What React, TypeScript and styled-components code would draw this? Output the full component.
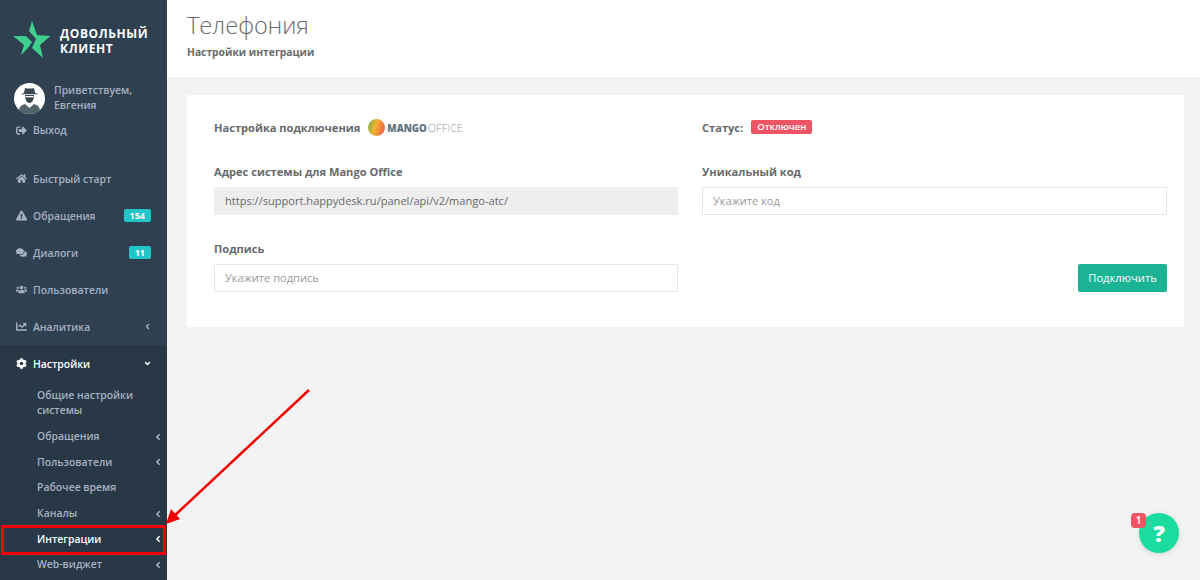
import styled, { createGlobalStyle } from 'styled-components'
import { FaSignOutAlt, FaHome, FaExclamationTriangle, FaComments, FaUsers, FaChartLine, FaCog, FaAngleLeft, FaAngleDown } from 'react-icons/fa'

const GlobalStyle = createGlobalStyle`
  html, body { margin: 0; padding: 0; height: 100%; overflow: hidden; }
  body { font-family: 'Open Sans', 'Liberation Sans', sans-serif; background: #f3f3f4; }
`

const Page = styled.div`
  position: relative;
  display: flex;
  width: 1200px;
  height: 580px;
  overflow: hidden;
`

const Sidebar = styled.aside`
  flex: 0 0 167px;
  display: flex;
  flex-direction: column;
  background: #2f4050;
  overflow: hidden;
`

const Brand = styled.div`
  display: flex;
  align-items: center;
  gap: 9px;
  padding: 20px 0 0 13px;
  height: 39px;
`

const BrandName = styled.div`
  color: #fff;
  font-size: 12px;
  line-height: 15px;
  font-weight: 700;
  letter-spacing: 0.6px;
  padding-top: 2px;
`

const Profile = styled.div`
  display: flex;
  gap: 9px;
  padding: 24px 0 0 14px;
`

const Greeting = styled.div`
  color: #a7b1c2;
  font-size: 10.4px;
  line-height: 14.5px;
  font-weight: 600;
`

const MenuRow = styled.div<{ $active?: boolean }>`
  display: flex;
  align-items: center;
  height: 37px;
  flex: none;
  padding: 0 15px 0 16px;
  font-size: 10.4px;
  font-weight: 600;
  color: ${p => (p.$active ? '#fff' : '#a7b1c2')};
  background: ${p => (p.$active ? '#293846' : 'transparent')};

  svg.lead { flex: 0 0 11px; width: 11px; height: 11px; margin-right: 6px; }
`

const Logout = styled(MenuRow)`
  height: 20px;
  margin-top: 5px;
  margin-bottom: 20px;
`

const MenuLabel = styled.span`
  flex: 1;
  white-space: nowrap;
`

const WrapLabel = styled(MenuLabel)`
  white-space: normal;
`

const Count = styled.span`
  background: #23c6c8;
  color: #fff;
  font-size: 9px;
  font-weight: 700;
  line-height: 13px;
  padding: 0 6px;
  border-radius: 2px;
  margin-right: 1px;
`

const SubMenu = styled.div`
  flex: 1;
  background: #293846;
`

const SubRow = styled.div<{ $active?: boolean; $tall?: boolean }>`
  display: flex;
  align-items: center;
  height: ${p => (p.$tall ? '42px' : '25.6px')};
  padding: 0 5px 0 37px;
  font-size: 10.4px;
  line-height: 15px;
  font-weight: 600;
  color: ${p => (p.$active ? '#fff' : '#a7b1c2')};

  svg { width: 8px; height: 10px; flex: none; }
`

const Main = styled.main`
  flex: 1;
  display: flex;
  flex-direction: column;
  min-width: 0;
`

const Header = styled.header`
  height: 77px;
  flex: none;
  box-sizing: border-box;
  background: #fff;
  padding: 9px 20px 0;
`

const Title = styled.h1`
  margin: 0;
  font-size: 23.6px;
  line-height: 33px;
  font-weight: 300;
  color: #676a6c;
`

const Subtitle = styled.div`
  margin-top: 3px;
  font-size: 10.3px;
  line-height: 15px;
  font-weight: 700;
  color: #676a6c;
`

const Card = styled.section`
  margin: 18px 16px 0 20px;
  height: 232px;
  box-sizing: border-box;
  background: #fff;
  padding: 22px 0 0 27px;
  display: grid;
  grid-template-columns: 464px 465px;
  column-gap: 24px;
  grid-template-rows: 20px 78px 77px;
  align-content: start;
`

const Heading = styled.div`
  display: flex;
  align-items: center;
  font-size: 11.1px;
  font-weight: 700;
  color: #676a6c;
  height: 20px;
`

const Field = styled.div`
  display: flex;
  flex-direction: column;
  align-self: end;
`

const FieldLabel = styled.label`
  font-size: 11.1px;
  line-height: 16px;
  font-weight: 700;
  color: #676a6c;
  margin-bottom: 7px;
`

const Input = styled.input`
  box-sizing: border-box;
  width: 100%;
  height: 28px;
  border: 1px solid #e5e6e7;
  border-radius: 1px;
  padding: 0 10px 2px;
  font-family: inherit;
  font-size: 11.07px;
  color: #676a6c;
  background: #fff;
  outline: none;
  &::placeholder { color: #999; opacity: 1; }
  &:disabled { background: #eee; border-color: #eee; }
`

const Badge = styled.span`
  margin-left: 8px;
  background: #ed5565;
  color: #fff;
  font-size: 9.5px;
  font-weight: 600;
  line-height: 14px;
  padding: 0 6px;
  border-radius: 2px;
`

const MangoWord = styled.span`
  margin-left: 2px;
  font-size: 9.7px;
  font-weight: 800;
  color: #5f7480;
  em { font-style: normal; font-size: 11px; font-weight: 300; color: #8fa0a9; margin-left: 1px; }
`

const ButtonCell = styled.div`
  display: flex;
  justify-content: flex-end;
  align-items: flex-end;
`

const ConnectButton = styled.button`
  height: 28px;
  width: 89px;
  border: 0;
  border-radius: 2px;
  background: #1ab394;
  color: #fff;
  font-family: inherit;
  font-size: 11.2px;
  padding: 0 0 2px;
`

// overlays
const Help = styled.div`
  position: absolute;
  left: 1139px;
  top: 513px;
  width: 40px;
  height: 40px;
  border-radius: 50%;
  background: #1bdc9f;
  box-shadow: 0 1px 6px rgba(0, 0, 0, 0.12);
  color: #fff;
  font-size: 23px;
  font-weight: 800;
  line-height: 40px;
  text-align: center;
`

const HelpCount = styled.span`
  position: absolute;
  left: -8px;
  top: 0;
  width: 15px;
  height: 15px;
  border-radius: 4px;
  background: #ed5565;
  color: #fff;
  font-size: 10px;
  font-weight: 600;
  line-height: 15px;
`

const Highlight = styled.div`
  position: absolute;
  left: 1px;
  top: 525px;
  width: 165px;
  height: 30px;
  box-sizing: border-box;
  border: 3px solid #f00000;
  border-radius: 1px;
`

const Arrow = styled.svg`
  position: absolute;
  left: 160px;
  top: 385px;
  width: 155px;
  height: 145px;
`

const StarLogo = () => (
  <svg width="38" height="38" viewBox="0 0 38 38" style={{ flex: 'none' }}>
    <path fill="#3ecf8e" d="M19 0 24 14 37.500 15 27 24 30 37 19 27 23 18 16 10Z" />
    <path fill="#3ecf8e" d="M0 15 13 15 19 21 15 27 8 34 11 24Z" />
  </svg>
)

const Avatar = () => (
  <svg width="31" height="32" viewBox="0 0 31 32" style={{ flex: 'none' }}>
    <circle cx="15.500" cy="15.500" r="15.500" fill="#fff" />
    <path fill="#54646b" d="M5 28c0-4 2.500-6 6-7l4.500 4 4.500-4c3.500 1 6 3 6 7-3 2-6.500 3-10.500 3S8 30 5 28Z" />
    <path fill="#3a474d" d="M10 10l1-5c2 .8 7 .8 9 0l1 5c1.500.3 2.500.7 3 1.300H7c.5-.6 1.500-1 3-1.300Z" />
    <path fill="#3a474d" d="M11 12h9c0 4-1.500 8-4.500 8S11 16 11 12Z" />
    <path fill="#fff" d="M11.500 13h8v1.300h-8z" />
  </svg>
)

const MangoMark = () => (
  <svg width="17" height="17" viewBox="0 0 17 17" style={{ flex: 'none', marginLeft: 8 }}>
    <defs>
      <linearGradient id="mango" x1="0" y1="0" x2="1" y2="0.3">
        <stop offset="0" stopColor="#6fb04a" />
        <stop offset="0.5" stopColor="#f2b233" />
        <stop offset="1" stopColor="#ee6a45" />
      </linearGradient>
    </defs>
    <circle cx="8.500" cy="8.500" r="8.500" fill="url(#mango)" />
  </svg>
)

const App = () => (
  <Page>
    <GlobalStyle />
    <Sidebar>
      <Brand>
        <StarLogo />
        <BrandName>ДОВОЛЬНЫЙ<br />КЛИЕНТ</BrandName>
      </Brand>
      <Profile>
        <Avatar />
        <Greeting>Приветствуем,<br />Евгения</Greeting>
      </Profile>
      <Logout>
        <FaSignOutAlt className="lead" />
        <MenuLabel>Выход</MenuLabel>
      </Logout>
      <MenuRow>
        <FaHome className="lead" />
        <MenuLabel>Быстрый старт</MenuLabel>
      </MenuRow>
      <MenuRow>
        <FaExclamationTriangle className="lead" />
        <MenuLabel>Обращения</MenuLabel>
        <Count>154</Count>
      </MenuRow>
      <MenuRow>
        <FaComments className="lead" />
        <MenuLabel>Диалоги</MenuLabel>
        <Count>11</Count>
      </MenuRow>
      <MenuRow>
        <FaUsers className="lead" />
        <MenuLabel>Пользователи</MenuLabel>
      </MenuRow>
      <MenuRow>
        <FaChartLine className="lead" />
        <MenuLabel>Аналитика</MenuLabel>
        <FaAngleLeft size={9} />
      </MenuRow>
      <MenuRow $active>
        <FaCog className="lead" />
        <MenuLabel>Настройки</MenuLabel>
        <FaAngleDown size={9} />
      </MenuRow>
      <SubMenu>
        <SubRow $tall><WrapLabel>Общие настройки системы</WrapLabel></SubRow>
        <SubRow><MenuLabel>Обращения</MenuLabel><FaAngleLeft /></SubRow>
        <SubRow><MenuLabel>Пользователи</MenuLabel><FaAngleLeft /></SubRow>
        <SubRow><MenuLabel>Рабочее время</MenuLabel></SubRow>
        <SubRow><MenuLabel>Каналы</MenuLabel><FaAngleLeft /></SubRow>
        <SubRow $active><MenuLabel>Интеграции</MenuLabel><FaAngleLeft /></SubRow>
        <SubRow><MenuLabel>Web-виджет</MenuLabel><FaAngleLeft /></SubRow>
      </SubMenu>
    </Sidebar>
    <Main>
      <Header>
        <Title>Телефония</Title>
        <Subtitle>Настройки интеграции</Subtitle>
      </Header>
      <Card>
        <Heading>
          Настройка подключения
          <MangoMark />
          <MangoWord>MANGO<em>OFFICE</em></MangoWord>
        </Heading>
        <Heading>
          Статус:
          <Badge>Отключен</Badge>
        </Heading>
        <Field>
          <FieldLabel>Адрес системы для Mango Office</FieldLabel>
          <Input disabled value="https://support.happydesk.ru/panel/api/v2/mango-atc/" readOnly />
        </Field>
        <Field>
          <FieldLabel>Уникальный код</FieldLabel>
          <Input placeholder="Укажите код" />
        </Field>
        <Field>
          <FieldLabel>Подпись</FieldLabel>
          <Input placeholder="Укажите подпись" />
        </Field>
        <ButtonCell>
          <ConnectButton>Подключить</ConnectButton>
        </ButtonCell>
      </Card>
    </Main>
    <Highlight />
    <Arrow viewBox="0 0 155 145">
      <path d="M149 5 12 133" stroke="#f00000" strokeWidth="2.500" fill="none" />
      <path d="M6 139 11 124 20 134Z" fill="#f00000" />
    </Arrow>
    <Help>
      ?
      <HelpCount>1</HelpCount>
    </Help>
  </Page>
)

export default App
